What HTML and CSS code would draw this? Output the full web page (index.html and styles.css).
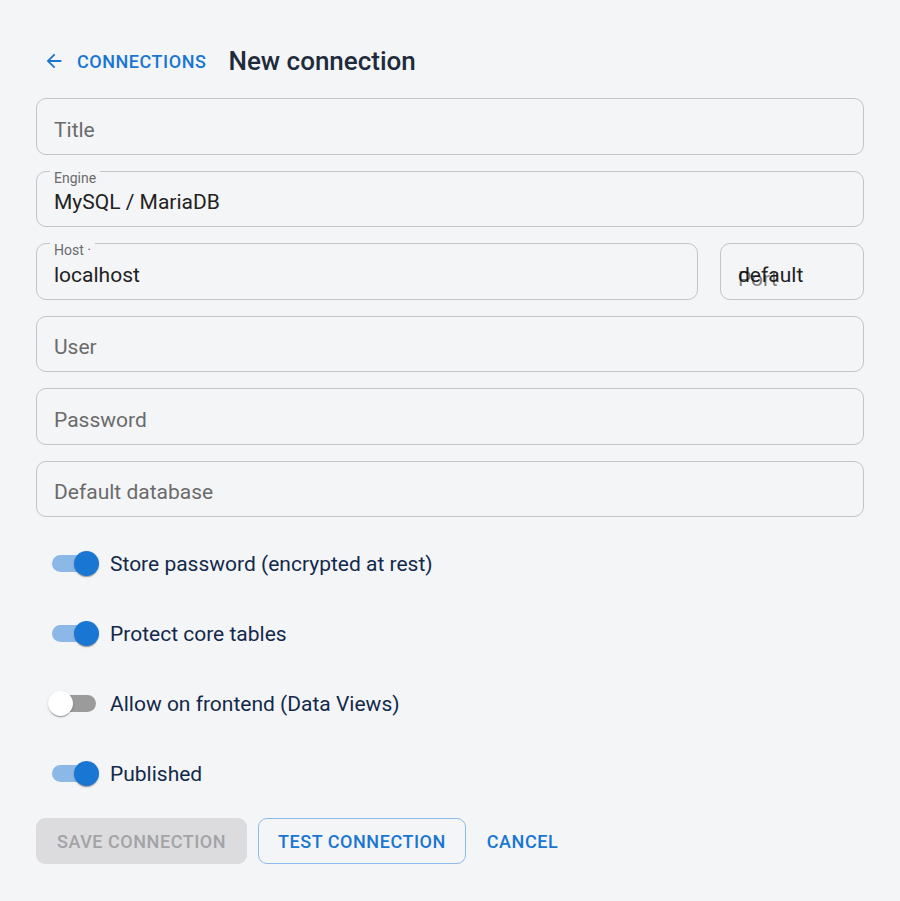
FILE: index.html
```html
<!DOCTYPE html>
<html lang="en">
<head>
<meta charset="utf-8">
<title>New connection</title>
<link rel="stylesheet" href="styles.css">
</head>
<body>
<div class="page">
  <header class="header">
    <a class="back" href="#">
      <svg class="back-icon" width="22" height="22" viewBox="0 0 24 24"><path d="M20 11H7.83l5.59-5.59L12 4l-8 8 8 8 1.41-1.41L7.83 13H20v-2z" fill="currentColor"/></svg>
      <span>Connections</span>
    </a>
    <h1 class="title">New connection</h1>
  </header>

  <form class="form">
    <div class="field"><span class="placeholder">Title</span></div>
    <div class="field"><span class="label">Engine</span><span class="value">MySQL / MariaDB</span></div>
    <div class="row">
      <div class="field grow"><span class="label">Host ·</span><span class="value">localhost</span></div>
      <div class="field port"><span class="value">default</span><span class="placeholder overlay">Port</span></div>
    </div>
    <div class="field"><span class="placeholder">User</span></div>
    <div class="field"><span class="placeholder">Password</span></div>
    <div class="field"><span class="placeholder">Default database</span></div>

    <div class="toggles">
      <label class="toggle on"><span class="switch"><span class="track"></span><span class="thumb"></span></span><span class="tlabel">Store password (encrypted at rest)</span></label>
      <label class="toggle on"><span class="switch"><span class="track"></span><span class="thumb"></span></span><span class="tlabel">Protect core tables</span></label>
      <label class="toggle off"><span class="switch"><span class="track"></span><span class="thumb"></span></span><span class="tlabel">Allow on frontend (Data Views)</span></label>
      <label class="toggle on"><span class="switch"><span class="track"></span><span class="thumb"></span></span><span class="tlabel">Published</span></label>
    </div>

    <div class="actions">
      <button type="button" class="btn disabled">Save connection</button>
      <button type="button" class="btn outlined">Test connection</button>
      <button type="button" class="btn text">Cancel</button>
    </div>
  </form>
</div>
</body>
</html>
```
FILE: styles.css
```css
html, body {
  margin: 0;
  background: #f4f5f7;
}
body {
  font-family: Roboto, "Liberation Sans", sans-serif;
  color: rgba(0,0,0,0.87);
}
.page {
  padding: 40px 36px 36px 36px;
}
.header {
  display: flex;
  align-items: center;
  height: 42px;
  gap: 22px;
  margin-bottom: 16px;
}
.back {
  display: flex;
  align-items: center;
  gap: 12px;
  color: #1976d2;
  text-decoration: none;
  font-size: 18px;
  font-weight: 500;
  letter-spacing: 0.03em;
  text-transform: uppercase;
  padding-left: 7px;
}
.back-icon { display: block; }
.title {
  margin: 0;
  font-size: 26px;
  font-weight: 500;
  color: #1e2b3c;
}
.form {
  display: flex;
  flex-direction: column;
  gap: 16px;
}
.row {
  display: flex;
  gap: 22px;
}
.grow { flex: 1; }
.port { width: 144px; flex: none; }
.field {
  position: relative;
  box-sizing: border-box;
  height: 56.5px;
  border: 1px solid #c4c4c4;
  border-radius: 10px;
  padding: 0 17px;
  display: flex;
  align-items: center;
  font-size: 21px;
}
.placeholder {
  color: #6b6b6b;
  padding-top: 7px;
}
.value {
  color: #222;
  padding-top: 7px;
}
.label {
  position: absolute;
  top: -3px;
  left: 13px;
  padding: 0 4px;
  background: #f4f5f7;
  font-size: 14px;
  line-height: 18px;
  color: #6b6b6b;
}
.overlay {
  position: absolute;
  left: 17px;
  top: 16px;
  padding-top: 7px;
  color: rgba(0,0,0,0.5);
}
.toggles {
  display: flex;
  flex-direction: column;
  gap: 31px;
  padding-top: 11px;
  padding-bottom: 9px;
}
.toggle {
  display: flex;
  align-items: center;
  height: 39px;
  gap: 12px;
  font-size: 21px;
  color: #13294b;
}
.switch {
  position: relative;
  width: 62px;
  height: 39px;
  flex: none;
}
.track {
  position: absolute;
  left: 16px;
  top: 11px;
  width: 44px;
  height: 17px;
  border-radius: 9px;
}
.thumb {
  position: absolute;
  top: 7px;
  width: 25px;
  height: 25px;
  border-radius: 50%;
  box-shadow: 0 2px 1px -1px rgba(0,0,0,0.2), 0 1px 1px rgba(0,0,0,0.14), 0 1px 3px rgba(0,0,0,0.12);
}
.on .track { background: #8cb8e8; }
.on .thumb { left: 38px; background: #1976d2; }
.off .track { background: #9b9b9b; }
.off .thumb { left: 12px; background: #ffffff; }
.actions {
  display: flex;
  align-items: center;
  gap: 11px;
}
.btn {
  font-family: Roboto, "Liberation Sans", sans-serif;
  font-size: 18px;
  font-weight: 500;
  letter-spacing: 0.03em;
  text-transform: uppercase;
  height: 46px;
  border-radius: 9px;
  padding: 0 20px;
  border: 1px solid transparent;
  background: transparent;
}
.btn.disabled {
  background: #dcdcde;
  color: #a3a3a5;
}
.btn.outlined {
  border-color: #8dbbea;
  color: #1976d2;
  padding: 0 19px;
}
.btn.text {
  color: #1976d2;
  padding: 0 9px;
}
```
